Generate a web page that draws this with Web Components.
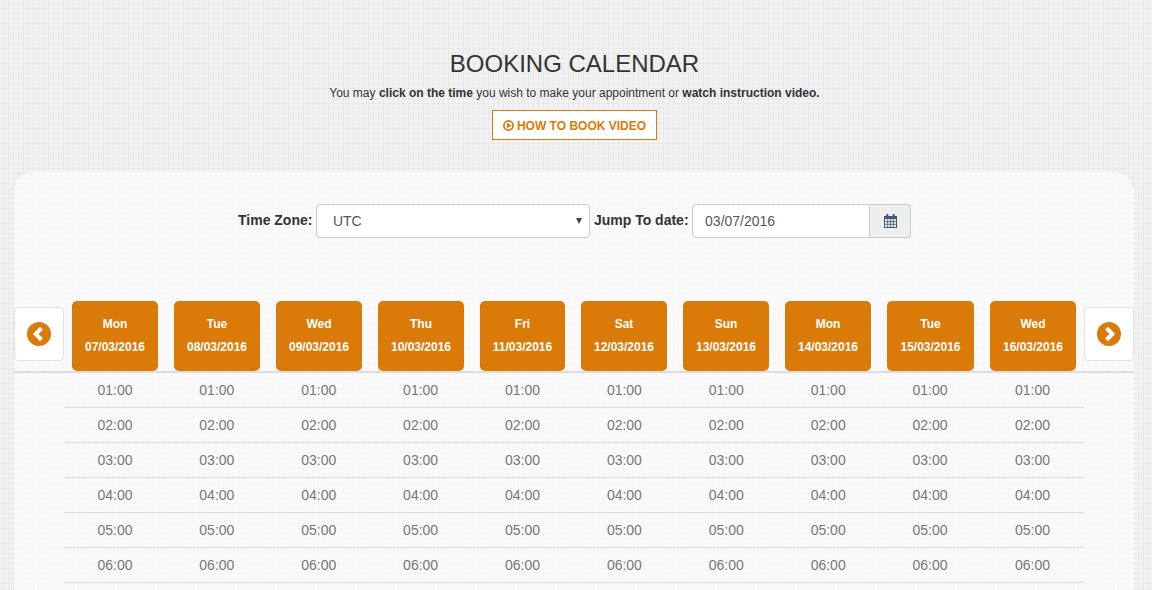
<!DOCTYPE html>
<html><head><meta charset="utf-8">
<style>
html,body{margin:0;padding:0;height:590px;overflow:hidden}
body{font-family:"Liberation Sans",Arial,sans-serif;color:#333;background-color:#f2f2f2;
background-image:linear-gradient(#e9e9e9 1px,transparent 1px),linear-gradient(90deg,#e9e9e9 1px,transparent 1px);background-size:5px 5px;background-position:3px 3px}
</style></head><body>
<booking-page></booking-page>
<template id="h"><style>
:host{display:block;text-align:center;padding:49px 3px 0 0;height:123px}
h1{margin:0;font:400 24px/30px "Liberation Sans",Arial,sans-serif;color:#333}
p{margin:5px 0 0;font-size:12px;line-height:18px;color:#333}
a{display:inline-flex;align-items:center;gap:3px;box-sizing:border-box;height:30px;width:165px;justify-content:center;margin-top:8px;padding-top:1px;background:#fff;border:1px solid #da7a09;color:#da7a09;font-weight:700;font-size:12px}
svg{width:11px;height:11px}
</style><h1>BOOKING CALENDAR</h1><p>You may <b>click on the time</b> you wish to make your appointment or <b>watch instruction video.</b></p>
<a><svg viewBox="0 0 12 12"><circle cx="6" cy="6" r="5" fill="none" stroke="#da7a09" stroke-width="1.9"/><path d="M4.4 3 9.4 6 4.4 9z" fill="#da7a09"/></svg>HOW TO BOOK VIDEO</a></template>

<template id="t"><style>
:host{display:flex;align-items:center;height:34px;padding-left:224px;font-size:14px;font-weight:700;color:#333;line-height:32px}
span{padding-bottom:3px}
.l1{margin-right:3.5px}
.l2{margin-right:3.5px}
.sel{box-sizing:border-box;width:274px;height:34px;margin-right:4px;background:#fff;border:1px solid #ccc;border-radius:4px;display:flex;align-items:center;justify-content:space-between;padding:0 7px 1px 16px;font-weight:400;color:#555}
.sel i{width:0;height:0;border:3.5px solid transparent;border-top:6px solid #444;border-bottom:0;margin-top:1px}
.grp{display:flex;height:34px}
.inp{box-sizing:border-box;width:178px;background:#fff;border:1px solid #ccc;border-radius:4px 0 0 4px;padding:0 12px 1px;display:flex;align-items:center;font-weight:400;color:#555}
.add{box-sizing:border-box;width:41px;background:#eee;border:1px solid #ccc;border-left:0;border-radius:0 4px 4px 0;display:flex;align-items:center;justify-content:center}
svg{width:13px;height:14px}
</style><span class="l1">Time Zone:</span><div class="sel">UTC<i></i></div><span class="l2">Jump To date:</span>
<div class="grp"><div class="inp">03/07/2016</div><div class="add"><svg viewBox="0 0 13 14"><path fill="#46557a" d="M0 2h2.3V0h2v2h4.4V0h2v2H13v12H0zM1 5v8h11V5z"/><path stroke="#46557a" stroke-width=".8" fill="none" d="M1 7.6h11M1 10.3h11M3.7 5v8M6.5 5v8M9.3 5v8"/></svg></div></div></template>

<template id="d"><style>
:host{display:flex;flex-direction:column;justify-content:center;align-items:center;box-sizing:border-box;height:70px;padding-bottom:2px;background:#da7a09;border-radius:5px;color:#fff;font-weight:700;font-size:12px;gap:9px;line-height:14px}
</style><slot name="a"></slot><slot name="b"></slot></template>

<template id="n"><style>
:host{display:flex;align-items:center;justify-content:center;box-sizing:border-box;width:50px;height:54px;margin-bottom:4px;background:#fff;border:1px solid #e3e3e3;border-radius:4px}
svg{width:24px;height:24px}
</style><svg viewBox="0 0 24 24"><circle cx="12" cy="12" r="12" fill="#da7a09"/><path fill="#fff" d="M13 4.8 15.9 7.7 11.6 12l4.3 4.3L13 19.2 5.8 12z"/></svg></template>

<template id="c"><style>
:host{display:block;text-align:center;font-size:14px;color:#777}
div{height:34px;line-height:34px;border-bottom:1px solid #ddd}
</style><div>01:00</div><div>02:00</div><div>03:00</div><div>04:00</div><div>05:00</div><div>06:00</div></template>

<script>
const mk=(n,id)=>customElements.define(n,class extends HTMLElement{constructor(){super();this.attachShadow({mode:'open'}).appendChild(document.getElementById(id).content.cloneNode(true))}});
mk('page-head','h');mk('filter-bar','t');mk('day-head','d');mk('time-col','c');mk('nav-btn','n');
customElements.define('booking-page',class extends HTMLElement{constructor(){super();const s=this.attachShadow({mode:'open'});
const days=[['Mon','07'],['Tue','08'],['Wed','09'],['Thu','10'],['Fri','11'],['Sat','12'],['Sun','13'],['Mon','14'],['Tue','15'],['Wed','16']];
s.innerHTML=`<style>
:host{display:block}
.panel{margin:0 18px 0 14px;height:418px;background:rgba(255,255,255,.62);border-radius:20px 20px 0 0;padding-top:32px;box-sizing:border-box}
.hd{display:flex;align-items:center;height:70px;margin-top:63px;border-bottom:2px solid #ddd;justify-content:space-between}
.days{display:grid;grid-template-columns:102px 102px 102px 102px 101px 102px 102px 102px 103px 86px;width:1004px}
.days day-head{margin-right:16px}
.days day-head:last-child{margin-right:0}
.cols{display:grid;grid-template-columns:repeat(9,101.9px) 1fr;margin:0 50px}
</style><page-head></page-head><div class="panel"><filter-bar></filter-bar>
<div class="hd"><nav-btn id="l"></nav-btn><div class="days">${days.map(d=>`<day-head><span slot="a">${d[0]}</span><span slot="b">${d[1]}/03/2016</span></day-head>`).join('')}</div><nav-btn id="r"></nav-btn></div>
<div class="cols">${days.map(()=>'<time-col></time-col>').join('')}</div></div>`;
s.getElementById('r').shadowRoot.querySelector('svg').style.transform='scaleX(-1)';
}});
</script>
</body></html>
